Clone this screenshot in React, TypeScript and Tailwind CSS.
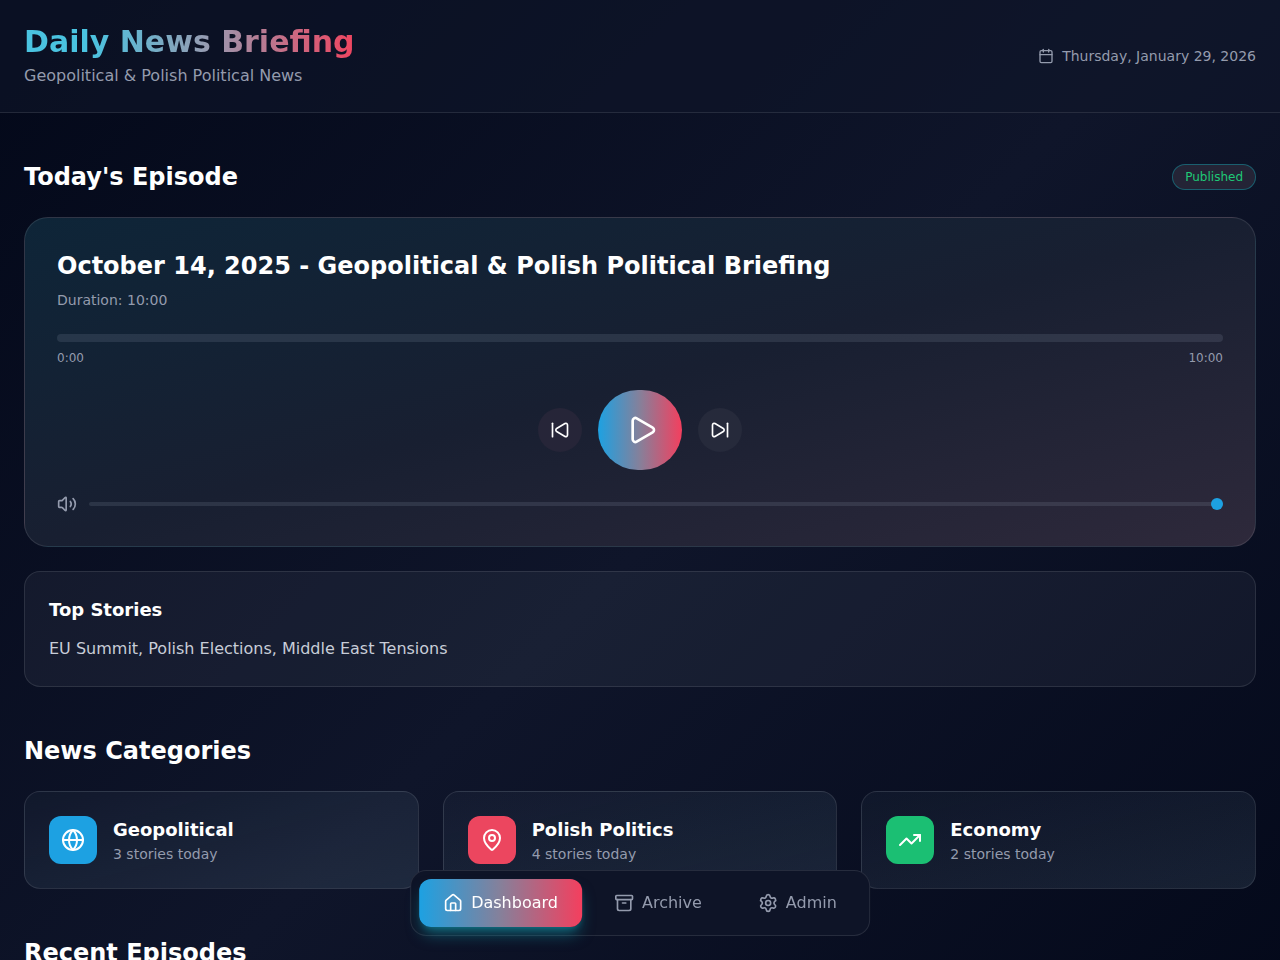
import { useState } from "react";
import {
  Archive,
  Calendar,
  Globe,
  House,
  MapPin,
  Play,
  Settings,
  SkipBack,
  SkipForward,
  TrendingUp,
  Volume2,
  type LucideIcon,
} from "lucide-react";
import { clsx } from "clsx";

interface Category {
  name: string;
  stories: number;
  icon: LucideIcon;
  color: "blue" | "red" | "green";
}

interface NavItem {
  id: string;
  label: string;
  icon: LucideIcon;
}

const categories: Category[] = [
  { name: "Geopolitical", stories: 3, icon: Globe, color: "blue" },
  { name: "Polish Politics", stories: 4, icon: MapPin, color: "red" },
  { name: "Economy", stories: 2, icon: TrendingUp, color: "green" },
];

const navItems: NavItem[] = [
  { id: "dashboard", label: "Dashboard", icon: House },
  { id: "archive", label: "Archive", icon: Archive },
  { id: "admin", label: "Admin", icon: Settings },
];

const iconBg = {
  blue: "bg-[#1da1e2]",
  red: "bg-[#ec465f]",
  green: "bg-[#1bbf73]",
};

function Header() {
  return (
    <header className="border-b border-white/10 bg-[#0f1529]/60 p-6">
      <div className="flex items-center justify-between">
        <div>
          <h1 className="mb-1 bg-linear-to-r/srgb from-[#4ac3e0] from-20% via-[#969cb2] via-55% to-[#ef4560] bg-clip-text text-3xl font-bold text-transparent">
            Daily News Briefing
          </h1>
          <p className="text-[#949bad]">Geopolitical &amp; Polish Political News</p>
        </div>
        <div className="flex items-center gap-2 text-sm text-[#949bad]">
          <Calendar className="h-4 w-4" />
          <span>Thursday, January 29, 2026</span>
        </div>
      </div>
    </header>
  );
}

function Player() {
  const [volume, setVolume] = useState(100);

  return (
    <div className="rounded-3xl border border-white/10 bg-linear-to-br/srgb from-[#0e2538] via-[#181f31] to-[#2e293b] p-8">
      <h3 className="text-2xl font-bold">October 14, 2025 - Geopolitical &amp; Polish Political Briefing</h3>
      <p className="mt-2 mb-6 text-sm text-[#949bad]">Duration: 10:00</p>

      <div className="h-2 rounded-full bg-[#a3b1c4]/15" />
      <div className="mt-2 mb-6 flex justify-between text-xs text-[#949bad]">
        <span>0:00</span>
        <span>10:00</span>
      </div>

      <div className="flex items-center justify-center gap-4">
        <button type="button" aria-label="Previous" className="rounded-full bg-[#262538] p-3">
          <SkipBack className="h-5 w-5" />
        </button>
        <button
          type="button"
          aria-label="Play"
          className="rounded-full bg-linear-to-r/srgb from-[#1da1e2] via-[#86809a] to-[#f43f5e] p-6"
        >
          <Play className="ml-1 h-8 w-8" />
        </button>
        <button type="button" aria-label="Next" className="rounded-full bg-[#262a3b] p-3">
          <SkipForward className="h-5 w-5" />
        </button>
      </div>

      <div className="mt-6 flex items-center gap-3">
        <Volume2 className="h-5 w-5 text-[#949bad]" />
        <input
          type="range"
          aria-label="Volume"
          min={0}
          max={100}
          value={volume}
          onChange={(e) => setVolume(Number(e.target.value))}
          className="h-1 flex-1 cursor-pointer appearance-none rounded-full bg-[#a3b1c4]/15 [&::-webkit-slider-thumb]:h-3 [&::-webkit-slider-thumb]:w-3 [&::-webkit-slider-thumb]:appearance-none [&::-webkit-slider-thumb]:rounded-full [&::-webkit-slider-thumb]:bg-[#1da1e2]"
        />
      </div>
    </div>
  );
}

function CategoryCard({ name, stories, icon: Icon, color }: Category) {
  return (
    <div className="flex items-center gap-4 rounded-2xl border border-white/10 bg-linear-to-br/srgb from-[#7ea3b8]/5 to-[#7ea3b8]/15 p-6">
      <div className={clsx("flex h-12 w-12 shrink-0 items-center justify-center rounded-xl", iconBg[color])}>
        <Icon className="h-6 w-6" />
      </div>
      <div>
        <h3 className="text-lg font-semibold">{name}</h3>
        <p className="text-sm text-[#949bad]">{stories} stories today</p>
      </div>
    </div>
  );
}

function BottomNav() {
  const [active, setActive] = useState("dashboard");

  return (
    <nav className="fixed bottom-6 left-1/2 flex -translate-x-1/2 gap-2 rounded-2xl border border-white/10 bg-[#0e1427] p-2">
      {navItems.map(({ id, label, icon: Icon }) => (
        <button
          key={id}
          type="button"
          onClick={() => setActive(id)}
          className={clsx(
            "flex items-center gap-2 rounded-xl px-6 py-3",
            active === id
              ? "bg-linear-to-r/srgb from-[#1da1e2] via-[#86809a] to-[#f43f5e] text-white shadow-lg shadow-[#12a5b8]/50"
              : "text-[#949bad]"
          )}
        >
          <Icon className="h-5 w-5" />
          <span>{label}</span>
        </button>
      ))}
    </nav>
  );
}

export default function App() {
  return (
    <div className="min-h-screen bg-linear-135/srgb from-[#030819] via-[#0f152a] to-[#030819] font-['DejaVu_Sans',sans-serif] text-white">
      <Header />
      <main className="space-y-12 px-6 pt-12 pb-32">
        <section>
          <div className="mb-6 flex items-center justify-between">
            <h2 className="text-2xl font-bold">Today's Episode</h2>
            <span className="rounded-full border border-[#109aa8]/50 bg-[#242436] px-3 py-1 text-xs text-[#1fc977]">
              Published
            </span>
          </div>
          <Player />
          <div className="mt-6 rounded-2xl border border-white/10 bg-[#94a3b8]/8 p-6">
            <h3 className="mb-3 text-lg font-semibold">Top Stories</h3>
            <p className="leading-relaxed text-[#c8cdd8]">EU Summit, Polish Elections, Middle East Tensions</p>
          </div>
        </section>

        <section>
          <h2 className="mb-6 text-2xl font-bold">News Categories</h2>
          <div className="grid grid-cols-1 gap-6 md:grid-cols-3">
            {categories.map((category) => (
              <CategoryCard key={category.name} {...category} />
            ))}
          </div>
        </section>

        <section>
          <h2 className="text-2xl font-bold">Recent Episodes</h2>
        </section>
      </main>
      <BottomNav />
    </div>
  );
}
